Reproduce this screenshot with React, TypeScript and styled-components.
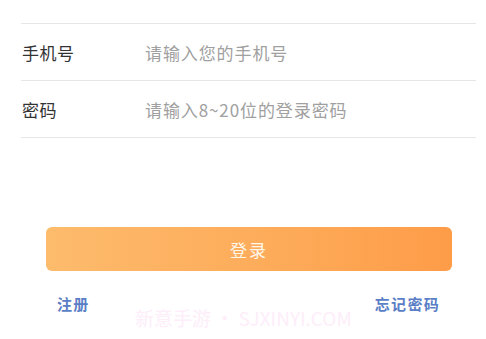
import React from "react";
import styled, { createGlobalStyle } from "styled-components";

const Global = createGlobalStyle`
  html, body { margin: 0; padding: 0; background: #ffffff; }
  body { font-family: "Noto Sans CJK SC", "Noto Sans", sans-serif; }
  * { box-sizing: border-box; }
`;

const Page = styled.div`
  position: relative;
  width: 486px;
  height: 339px;
  overflow: hidden;
  background: #fff;
`;

const Form = styled.div`
  margin: 23px 10px 0 21px;
  border-top: 1px solid #e6e6e6;
  display: flex;
  flex-direction: column;
`;

const Row = styled.div`
  height: 57px;
  display: flex;
  align-items: center;
  border-bottom: 1px solid #e6e6e6;
`;

const Label = styled.div`
  width: 124px;
  padding-left: 1px;
  font-size: 17px;
  letter-spacing: 0.5px;
  color: #333333;
`;

const Input = styled.input`
  flex: 1;
  border: none;
  outline: none;
  background: transparent;
  padding: 0;
  font-family: "Noto Sans CJK SC", "Noto Sans", sans-serif;
  font-size: 17px;
  letter-spacing: 0.9px;
  color: #333;
  &::placeholder { color: #a0a0a0; }
`;

const ButtonWrap = styled.div`
  margin: 89px 34px 0 46px;
`;

const LoginButton = styled.button`
  width: 100%;
  height: 44px;
  border: none;
  border-radius: 6px;
  background: linear-gradient(90deg, #fdbb6c 0%, #fdaa58 60%, #fe9c48 100%);
  color: #fff6ea;
  font-family: "Noto Sans CJK SC", "Noto Sans", sans-serif;
  font-size: 17px;
  letter-spacing: 2px;
  display: flex;
  align-items: center;
  justify-content: center;
`;

const Links = styled.div`
  display: flex;
  justify-content: space-between;
  margin: 22px 46px 0 57px;
`;

const LinkText = styled.span`
  font-size: 15px;
  font-weight: 700;
  letter-spacing: 1.3px;
  color: #5a7ec6;
`;

const Watermark = styled.div`
  position: absolute;
  left: 135px;
  top: 304px;
  font-size: 19px;
  white-space: nowrap;
  color: #fdeef9;
  pointer-events: none;
`;

export default function App() {
  return (
    <Page>
      <Global />
      <Form>
        <Row>
          <Label>手机号</Label>
          <Input placeholder="请输入您的手机号" />
        </Row>
        <Row>
          <Label>密码</Label>
          <Input type="password" placeholder="请输入8~20位的登录密码" />
        </Row>
      </Form>
      <ButtonWrap>
        <LoginButton>登录</LoginButton>
      </ButtonWrap>
      <Links>
        <LinkText>注册</LinkText>
        <LinkText>忘记密码</LinkText>
      </Links>
      <Watermark>新意手游 •&nbsp;SJXINYI.COM</Watermark>
    </Page>
  );
}
